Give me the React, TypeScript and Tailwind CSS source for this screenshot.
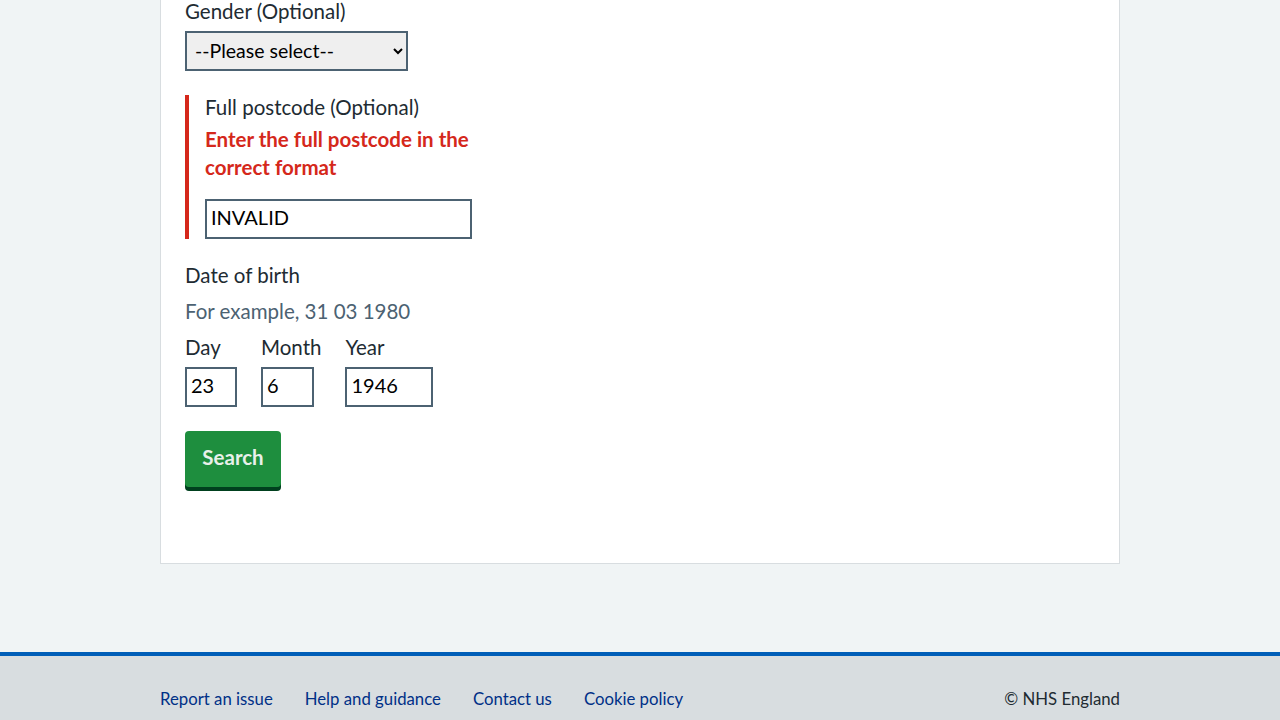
import React from 'react';

const font = { fontFamily: 'Lato, "Noto Sans", Arial, sans-serif' };

const DateField: React.FC<{ label: string; value: string; width: string }> = ({ label, value, width }) => (
  <div className="mr-6 flex flex-col">
    <label className="text-[20.5px] leading-7 text-[#212b32]">{label}</label>
    <input
      defaultValue={value}
      className={`${width} mt-1.5 h-10 border-2 border-[#4c6272] bg-white px-1 pb-1 text-[20px] text-black`}
    />
  </div>
);

export default function App() {
  return (
    <div className="min-h-screen overflow-hidden bg-[#f0f4f5]" style={font}>
      <main className="mx-auto w-[960px]">
        <div className="border border-t-0 border-[#d8dde0] bg-white px-6 pb-[76px]">
          <label className="-mt-[3px] block text-[20.5px] leading-7 text-[#212b32]">Gender (Optional)</label>
          <select className="mt-[6px] h-10 w-[223px] border-2 border-[#4c6272] bg-[#efefef] pb-0.5 pl-1 pr-1 text-[19.5px] text-black">
            <option>--Please select--</option>
          </select>

          <div className="mt-6 border-l-4 border-[#d5281b] pl-4">
            <label className="block text-[20.5px] leading-6 text-[#212b32]">Full postcode (Optional)</label>
            <p className="mt-[6px] w-[280px] text-[20.5px] font-bold leading-7 text-[#d5281b]">
              Enter the full postcode in the correct format
            </p>
            <input
              defaultValue="INVALID"
              className="mt-[18px] block h-10 w-[267px] border-2 border-[#4c6272] bg-white px-1 pb-1 text-[20px] text-black"
            />
          </div>

          <div className="mt-[22px]">
            <div className="text-[20.5px] leading-7 text-[#212b32]">Date of birth</div>
            <div className="mt-2 text-[20.5px] leading-7 text-[#4c6272]">For example, 31 03 1980</div>
            <div className="mt-2 flex">
              <DateField label="Day" value="23" width="w-[52px]" />
              <DateField label="Month" value="6" width="w-[53px]" />
              <DateField label="Year" value="1946" width="w-[88px]" />
            </div>
          </div>

          <button className="mt-6 h-14 w-24 rounded bg-[#1e8e3e] pb-1 text-[20.5px] font-bold text-[#e8f0ea] shadow-[0_4px_0_#00401e]">
            Search
          </button>
        </div>
      </main>

      <footer className="mt-[88px] h-40 border-t-4 border-[#005eb8] bg-[#d8dde0]">
        <div className="mx-auto flex w-[960px] items-center justify-between pt-[31px] text-[16.75px] leading-6">
          <ul className="flex gap-8 text-[#003087]">
            <li><a href="#">Report an issue</a></li>
            <li><a href="#">Help and guidance</a></li>
            <li><a href="#">Contact us</a></li>
            <li><a href="#">Cookie policy</a></li>
          </ul>
          <p className="text-[#212b32]">© NHS England</p>
        </div>
      </footer>
    </div>
  );
}
